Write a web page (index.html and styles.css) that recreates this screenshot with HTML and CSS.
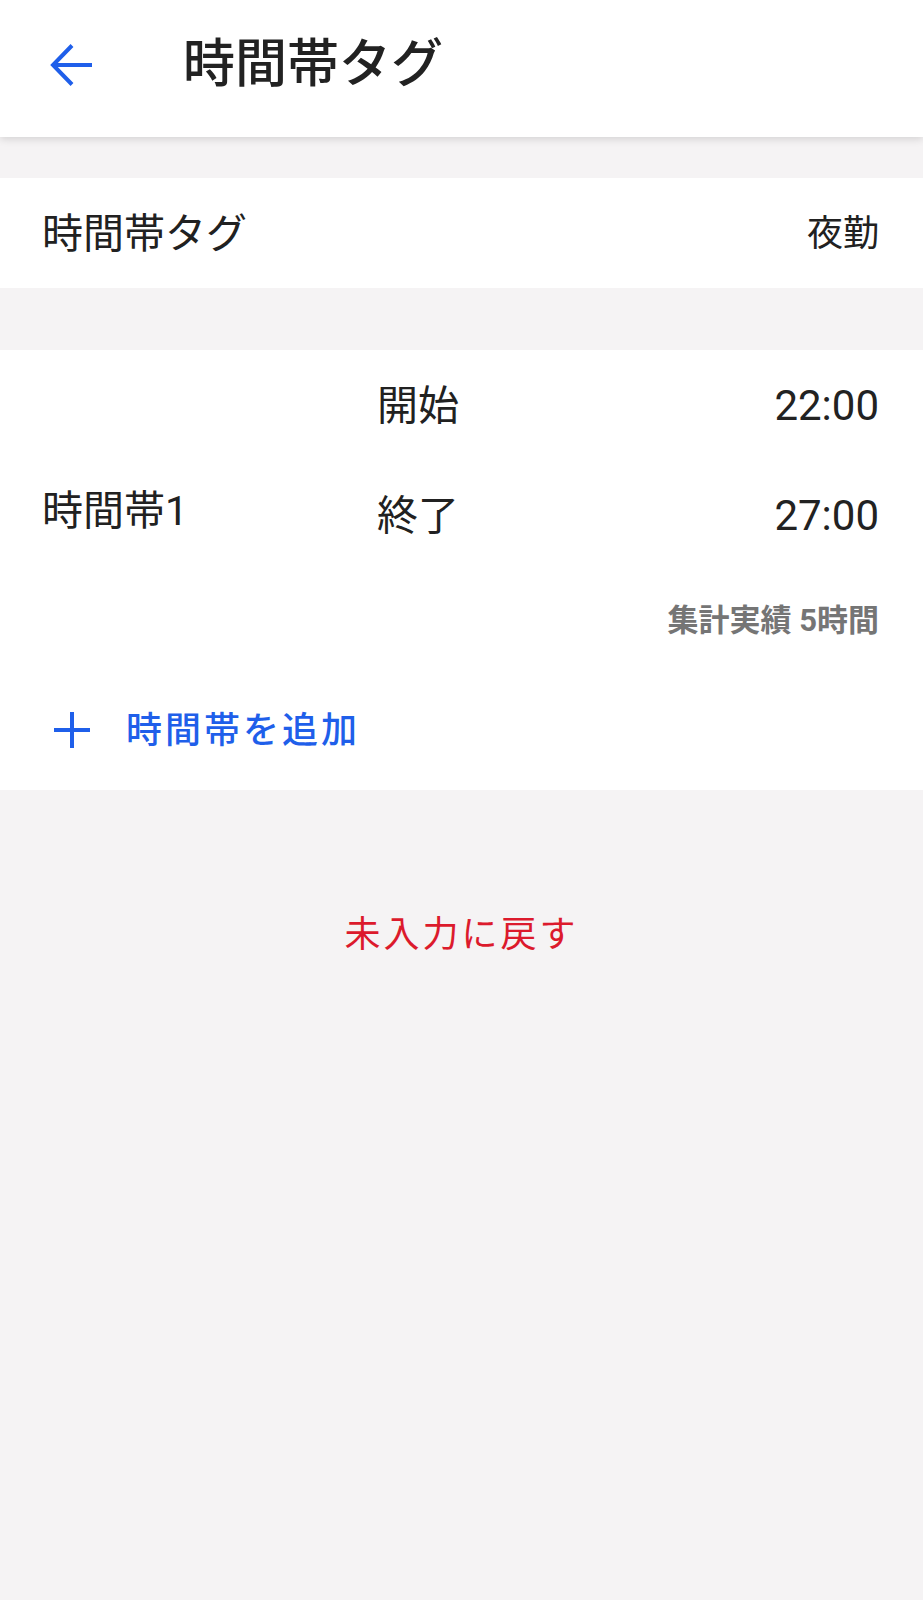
FILE: index.html
```html
<!DOCTYPE html>
<html lang="ja">
<head>
  <meta charset="UTF-8">
  <meta name="viewport" content="width=device-width, initial-scale=1.0">
  <title>時間帯タグ</title>
  <link rel="stylesheet" href="styles.css">
</head>
<body>
  <!-- App bar -->
  <header class="app-bar">
    <button class="back-button" type="button" aria-label="戻る">
      <svg width="44" height="44" viewBox="0 0 44 44">
        <path d="M22 2.5 L3 22 L22 41.5 M3 22 H42" fill="none" stroke="currentColor" stroke-width="4"/>
      </svg>
    </button>
    <h1 class="app-bar-title">時間帯タグ</h1>
  </header>

  <!-- Selected tag -->
  <section class="card tag-row">
    <span class="tag-label">時間帯タグ</span>
    <span class="tag-value">夜勤</span>
  </section>

  <!-- Time ranges -->
  <section class="card period">
    <div class="period-body">
      <div class="period-name">時間帯1</div>
      <div class="period-times">
        <div class="time-row">
          <span class="time-label">開始</span>
          <span class="time-value">22:00</span>
        </div>
        <div class="time-row">
          <span class="time-label">終了</span>
          <span class="time-value">27:00</span>
        </div>
        <div class="period-total"><span>集計実績 5時間</span></div>
      </div>
    </div>
    <button class="add-period" type="button">
      <svg width="36" height="36" viewBox="0 0 36 36">
        <path d="M18 0 V36 M0 18 H36" fill="none" stroke="currentColor" stroke-width="4"/>
      </svg>
      <span class="add-period-text">時間帯を追加</span>
    </button>
  </section>

  <div class="reset">
    <button class="reset-button" type="button">未入力に戻す</button>
  </div>
</body>
</html>
```

FILE: styles.css
```css
body {
  margin: 0;
  background-color: #f5f3f4;
  color: #212121;
  font-family: Roboto, "Noto Sans CJK JP", sans-serif;
}
button {
  font-family: inherit;
  background: none;
  border: none;
  padding: 0;
  cursor: pointer;
}

/* App bar */
.app-bar {
  position: relative;
  height: 137px;
  background-color: #fff;
  box-shadow: 0 2px 8px rgba(0, 0, 0, 0.14);
  display: flex;
  align-items: center;
  padding-left: 50px;
}
.back-button {
  color: #1f5fea;
  display: flex;
  margin-top: -8px;
}
.app-bar-title {
  margin: -8px 0 0 89px;
  font-size: 52px;
  font-weight: 500;
  line-height: 1;
  color: #222;
}

.card {
  background-color: #fff;
}

/* CJK glyphs sit low in the line box, lift them a little */
.tag-label,
.tag-value,
.period-name,
.time-label,
.period-total span,
.add-period-text {
  margin-bottom: 6px;
}

/* Tag row */
.tag-row {
  margin-top: 41px;
  height: 110px;
  display: flex;
  align-items: center;
  justify-content: space-between;
  padding: 0 44px 0 42px;
}
.tag-label {
  font-size: 41px;
}
.tag-value {
  font-size: 36px;
}

/* Time ranges */
.period {
  margin-top: 62px;
}
.period-body {
  display: flex;
  height: 320px;
  padding: 0 44px 0 42px;
}
.period-name {
  width: 335px;
  align-self: center;
  font-size: 41px;
}
.period-times {
  flex: 1;
  display: flex;
  flex-direction: column;
}
.time-row {
  height: 110px;
  display: flex;
  align-items: center;
  justify-content: space-between;
}
.time-label {
  font-size: 41px;
}
.time-value {
  font-size: 42px;
  color: #222;
}
.period-total {
  height: 100px;
  display: flex;
  align-items: center;
  justify-content: flex-end;
  font-size: 31px;
  font-weight: 700;
  color: #757575;
}
.add-period {
  height: 120px;
  width: 100%;
  display: flex;
  align-items: center;
  gap: 36px;
  padding-left: 54px;
  color: #1f5fea;
  font-size: 36px;
  font-weight: 500;
  letter-spacing: 3px;
}

/* Reset */
.reset {
  text-align: center;
  padding-top: 105px;
}
.reset-button {
  height: 72px;
  color: #dc1a2c;
  font-size: 36px;
  letter-spacing: 3px;
}
```
